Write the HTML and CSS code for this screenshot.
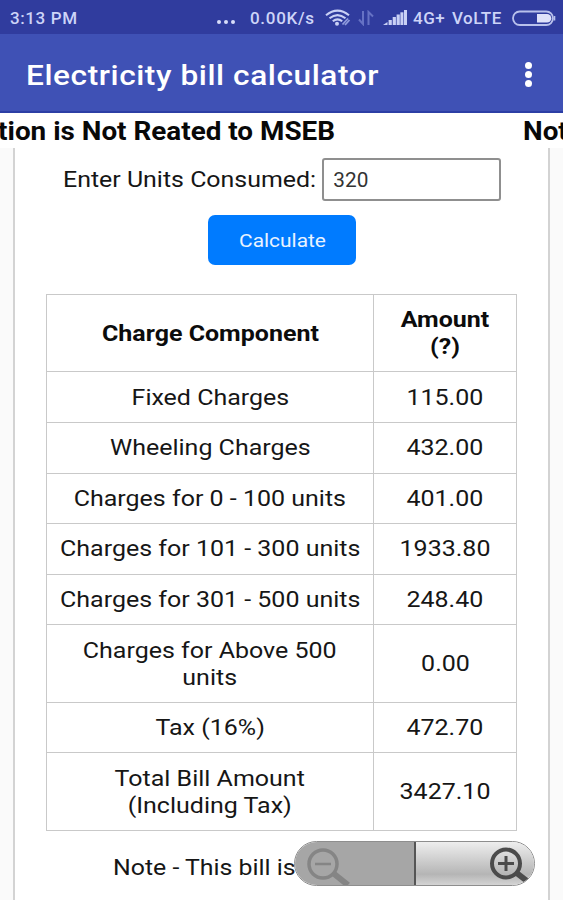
FILE: index.html
```
<!DOCTYPE html>
<html lang="en">
<head>
  <meta charset="UTF-8">
  <meta name="viewport" content="width=device-width, initial-scale=1.0">
  <title>Electricity bill calculator</title>
  <link rel="stylesheet" href="styles.css">
</head>
<body>
  <!-- Status bar -->
  <div class="status-bar">
    <span class="time">3:13 PM</span>
    <span class="more"><i></i><i></i><i></i></span>
    <span class="speed">0.00K/s</span>
    <svg class="wifi" width="26" height="18" viewBox="0 0 26 18" fill="none" stroke="#c9d0f5" stroke-width="2.1">
      <path d="M1 6.2 Q12.5 -3 24 6.2"/>
      <path d="M4.5 9.3 Q12.5 2.8 20.5 9.3"/>
      <path d="M7.8 12.3 Q12.5 8.3 17.2 12.3"/>
      <circle cx="12" cy="14.7" r="2" fill="#c9d0f5" stroke="none"/>
      <path d="M17.5 15.5 L23 9.5 M20 16 L24.5 11" stroke="#8f9bdc" stroke-width="1.8"/>
    </svg>
    <svg class="traffic" width="16" height="16" viewBox="0 0 16 16" fill="none" stroke="#6672c4" stroke-width="2">
      <path d="M5 1 V14 L1 9.5"/>
      <path d="M10.5 15 V2 L15 6.5"/>
    </svg>
    <svg class="signal" width="25" height="16" viewBox="0 0 25 16" fill="#c9d0f5">
      <path d="M0 15 L4.5 12 V15 Z"/>
      <rect x="5.6" y="10" width="3.2" height="5"/>
      <rect x="9.7" y="7" width="3.2" height="8"/>
      <rect x="13.6" y="4.5" width="3.2" height="10.5"/>
      <rect x="17.4" y="2.3" width="3" height="12.7"/>
      <rect x="21" y="0" width="3" height="15"/>
    </svg>
    <span class="network">4G+</span>
    <span class="volte">VoLTE</span>
    <svg class="battery" width="44" height="17" viewBox="0 0 44 17">
      <rect x="1" y="1.5" width="40" height="13.5" rx="6.75" fill="none" stroke="#b9c1ec" stroke-width="1.8"/>
      <path d="M25 4 H35 a4.3 4.3 0 0 1 0 8.6 H25 Z" fill="#dfe2fa"/>
      <path d="M42.5 6 V10.5" stroke="#b9c1ec" stroke-width="1.6"/>
    </svg>
  </div>

  <!-- App bar -->
  <header class="app-bar">
    <h1>Electricity bill calculator</h1>
    <div class="menu"><i></i><i></i><i></i></div>
  </header>

  <!-- Scrolling notice -->
  <div class="notice">
    <span class="notice-end">tion is Not Reated to MSEB</span>
    <span class="notice-start">Not</span>
  </div>

  <main class="container">
    <div class="field">
      <label for="units">Enter Units Consumed:</label>
      <div class="input-box"><input type="text" id="units" value="320"></div>
    </div>
    <button class="calculate"><span>Calculate</span></button>

    <table>
      <tr class="tall"><th><span>Charge Component</span></th><th><span>Amount<br>(?)</span></th></tr>
      <tr><td><span>Fixed Charges</span></td><td><span>115.00</span></td></tr>
      <tr><td><span>Wheeling Charges</span></td><td><span>432.00</span></td></tr>
      <tr><td><span>Charges for 0 - 100 units</span></td><td><span>401.00</span></td></tr>
      <tr><td><span>Charges for 101 - 300 units</span></td><td><span>1933.80</span></td></tr>
      <tr><td><span>Charges for 301 - 500 units</span></td><td><span>248.40</span></td></tr>
      <tr class="tall"><td><span>Charges for Above 500<br>units</span></td><td><span>0.00</span></td></tr>
      <tr><td><span>Tax (16%)</span></td><td><span>472.70</span></td></tr>
      <tr class="tall"><td><span>Total Bill Amount<br>(Including Tax)</span></td><td><span>3427.10</span></td></tr>
    </table>

    <p class="note">Note - This bill is</p>
  </main>

  <!-- Zoom buttons -->
  <div class="zoom">
    <div class="zoom-out">
      <svg width="46" height="38" viewBox="0 0 46 38" fill="none" stroke="#858585">
        <circle cx="17" cy="16" r="14" stroke-width="3.5"/>
        <path d="M9 16 H25" stroke-width="2.6"/>
        <path d="M27 25 L42 37" stroke-width="6"/>
      </svg>
    </div>
    <div class="zoom-in">
      <svg width="42" height="38" viewBox="0 0 42 38" fill="none" stroke="#4b4b4b">
        <circle cx="16" cy="16.5" r="14" stroke-width="4"/>
        <path d="M8 16.5 H24 M16 9 V24" stroke-width="3"/>
        <path d="M26 25.5 L37 34" stroke-width="6"/>
      </svg>
    </div>
  </div>
</body>
</html>
```
FILE: styles.css
```
* {
  box-sizing: border-box;
}

body {
  margin: 0;
  height: 900px;
  overflow: hidden;
  font-family: Roboto, sans-serif;
  font-size: 22px;
  line-height: 27px;
  color: #161616;
  background: #fff;
}

/* Status bar */
.status-bar {
  display: flex;
  align-items: center;
  height: 34px;
  padding: 2px 0 0 10px;
  font-size: 17px;
  font-weight: 500;
  line-height: 20px;
  white-space: nowrap;
  color: #cdd4f8;
  background: #303c9e;
}

.time {
  width: 207px;
  letter-spacing: 0.6px;
}

.more {
  display: flex;
  gap: 3px;
  width: 33px;
  padding-top: 8px;
}

.more i {
  width: 4px;
  height: 4px;
  border-radius: 50%;
  background: #d8ddfa;
}

.speed {
  width: 75px;
  letter-spacing: 0.7px;
}

.traffic {
  margin-left: 7px;
}

.signal {
  margin-left: 9px;
}

.network {
  width: 39px;
  margin-left: 5px;
  letter-spacing: 0.5px;
}

.volte {
  width: 60px;
  letter-spacing: 0.5px;
}

.battery {
  flex: none;
}

/* App bar */
.app-bar {
  display: flex;
  align-items: center;
  justify-content: space-between;
  height: 79px;
  padding: 4px 31px 0 26px;
  color: #fff;
  background: #3f51b5;
  border-bottom: 2px solid #2c3ea5;
}

h1 {
  margin: 0;
  padding-top: 2px;
  font-size: 28px;
  font-weight: 500;
  letter-spacing: 0.5px;
  transform: scaleX(1.13);
  transform-origin: left;
}

.menu {
  display: flex;
  flex-direction: column;
  gap: 2px;
}

.menu i {
  width: 7px;
  height: 7px;
  border-radius: 50%;
  background: #fff;
}

/* Scrolling notice */
.notice {
  display: flex;
  justify-content: space-between;
  height: 35px;
  overflow: hidden;
  font-size: 25px;
  font-weight: 700;
  line-height: 38px;
  white-space: nowrap;
  color: #080808;
}

.notice-end {
  width: 335px;
  text-align: right;
  transform: scaleX(1.114);
  transform-origin: right;
}

.notice-start {
  width: 40px;
  transform: scaleX(1.114);
  transform-origin: left;
}

/* Calculator */
.container {
  height: 752px;
  margin: 0 13px;
  padding: 10px 32px 0;
  border: solid #d3d3d3;
  border-width: 0 2px;
  background: #fff;
  box-shadow: 0 0 0 14px #fafafa;
  clip-path: inset(0 -14px);
}

.field {
  display: flex;
  align-items: center;
  margin-left: 16px;
  height: 43px;
}

label {
  width: 259px;
  white-space: nowrap;
  transform: scaleX(1.133);
  transform-origin: left;
}

.input-box {
  width: 179px;
  height: 43px;
  border: 2px solid #8f8f8f;
  border-radius: 3px;
}

input {
  width: 150px;
  height: 39px;
  padding: 0 0 0 9px;
  border: 0;
  outline: none;
  background: none;
  font: 20px Roboto, sans-serif;
  color: #333;
  transform: scaleX(1.04);
  transform-origin: left;
}

.calculate {
  display: block;
  width: 148px;
  height: 50px;
  margin: 14px 0 0 161px;
  padding: 0;
  border: 0;
  border-radius: 7px;
  font: 19px Roboto, sans-serif;
  color: #e9f3ff;
  background: #007bff;
}

.calculate span {
  display: inline-block;
  transform: scaleX(1.1);
}

table {
  width: 471px;
  margin: 29px 0 0 -1px;
  table-layout: fixed;
  border-collapse: collapse;
  text-align: center;
}

th, td {
  height: 50.6px;
  padding: 0;
  border: 1.5px solid #c9c9c9;
  white-space: nowrap;
}

.tall th, .tall td {
  height: 77.4px;
}

th:first-child {
  width: 327px;
}

th {
  font-weight: 700;
  color: #0c0c0c;
}

th span, td span {
  display: inline-block;
  transform: scaleX(1.136);
}

.note {
  margin: 23px 0 0 66px;
  transform: scaleX(1.13);
  transform-origin: left;
}

/* Zoom buttons */
.zoom {
  position: absolute;
  left: 294px;
  top: 841px;
  display: flex;
  width: 241px;
  height: 45px;
  border: 1px solid #8e8e8e;
  border-radius: 23px;
  overflow: hidden;
}

.zoom-out {
  width: 121px;
  padding: 6px 0 0 11px;
  border-right: 2px solid #555;
  background: #a6a6a6;
}

.zoom-in {
  flex: 1;
  padding: 5px 0 0 74px;
  background: linear-gradient(#eee, #c8c8c8 50%, #b5b5b5 75%, #d4d4d4);
}
```
